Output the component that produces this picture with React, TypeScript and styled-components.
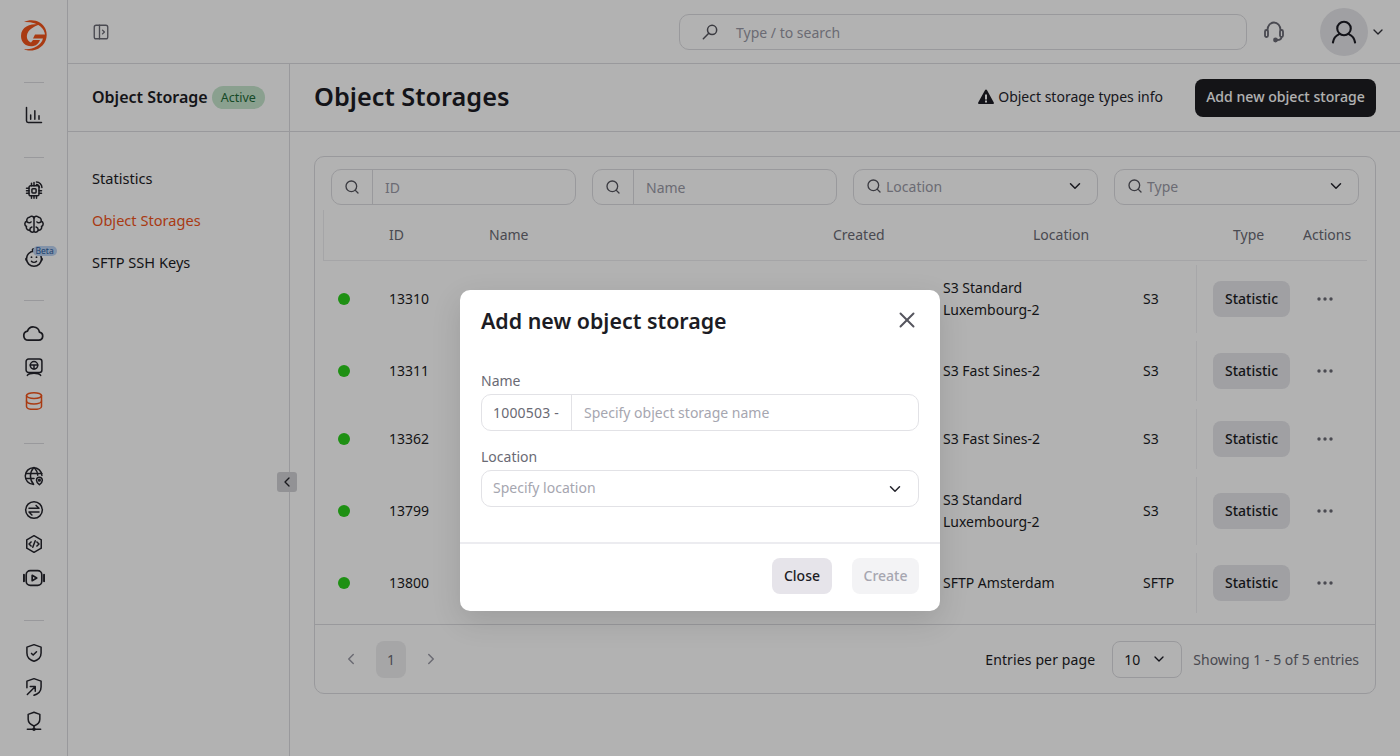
import React from 'react'
import styled, { createGlobalStyle } from 'styled-components'
import { ChevronDown, ChevronLeft, ChevronRight, Search, X } from 'lucide-react'

const GlobalStyle = createGlobalStyle`
	html, body {
		margin: 0;
		padding: 0;
		background: #fff;
	}
	body {
		font-family: 'Noto Sans', 'Open Sans', sans-serif;
		font-size: 14px;
		color: #1c1c24;
	}
	* {
		box-sizing: border-box;
	}
`

const orange = '#f2541b'

const Page = styled.div`
	position: relative;
	display: flex;
	width: 1400px;
	height: 756px;
	overflow: hidden;
`

const Rail = styled.nav`
	width: 68px;
	flex: none;
	display: flex;
	flex-direction: column;
	align-items: center;
	padding-top: 18px;
	border-right: 1px solid #dcdce0;
`

const LogoBox = styled.div`
	height: 34px;
	margin-bottom: 5px;
	display: flex;
	align-items: center;
`

const RailDivider = styled.div`
	width: 20px;
	height: 1px;
	flex: none;
	margin: 25px 0 15px;
	background: #dcdce0;
`

const RailItem = styled.div<{ $active?: boolean }>`
	position: relative;
	width: 34px;
	height: 34px;
	flex: none;
	display: flex;
	align-items: center;
	justify-content: center;
	color: ${p => (p.$active ? orange : '#24242c')};
`

const BetaBadge = styled.span`
	position: absolute;
	left: 16px;
	top: 5px;
	height: 10px;
	padding: 0 3px;
	border-radius: 5px;
	background: #bcd3f2;
	color: #2b5d9e;
	font-size: 8.500px;
	line-height: 10px;
`

const Column = styled.div`
	flex: 1;
	min-width: 0;
	display: flex;
	flex-direction: column;
`

const TopBar = styled.header`
	height: 64px;
	flex: none;
	display: flex;
	align-items: center;
	padding: 0 22px 0 24px;
	border-bottom: 1px solid #dcdce0;
`

const PanelToggle = styled.div`
	display: flex;
	color: #6a6a74;
	margin-right: 569px;
`

const SearchBox = styled.div`
	width: 568px;
	height: 36px;
	flex: none;
	display: flex;
	align-items: center;
	gap: 16px;
	padding-left: 20px;
	border: 1px solid #dcdce0;
	border-radius: 10px;
	color: #9a9aa6;
	svg {
		color: #55555e;
	}
	span {
		padding-top: 2px;
	}
`

const Headset = styled.div`
	display: flex;
	margin-left: 15px;
	color: #6a6a74;
`

const TopDivider = styled.div`
	width: 1px;
	height: 24px;
	margin: 0 16px 0 18px;
	background: #dcdce0;
`

const Avatar = styled.div`
	width: 48px;
	height: 48px;
	flex: none;
	display: flex;
	align-items: center;
	justify-content: center;
	border-radius: 50%;
	background: #e6e6ea;
	color: #1c1c24;
`

const AvatarCaret = styled.div`
	display: flex;
	margin-left: 2px;
	color: #33333b;
`

const Body = styled.div`
	flex: 1;
	min-height: 0;
	display: flex;
`

const SubNav = styled.aside`
	position: relative;
	width: 222px;
	flex: none;
	border-right: 1px solid #dcdce0;
`

const SubNavHeader = styled.div`
	height: 68px;
	display: flex;
	align-items: center;
	gap: 4px;
	padding: 0 0 1px 24px;
	border-bottom: 1px solid #dcdce0;
`

const SubNavTitle = styled.span`
	font-size: 16px;
	font-weight: 600;
`

const ActivePill = styled.span`
	height: 23px;
	padding: 0 9px;
	display: flex;
	align-items: center;
	border-radius: 12px;
	background: #c6e6cd;
	color: #1f6a38;
	font-size: 12.500px;
`

const SubNavList = styled.div`
	display: flex;
	flex-direction: column;
	padding: 25px 0 0 24px;
`

const SubNavLink = styled.a<{ $active?: boolean }>`
	height: 42px;
	display: flex;
	align-items: center;
	font-size: 14.600px;
	color: ${p => (p.$active ? orange : '#1c1c24')};
`

const Collapse = styled.div`
	position: absolute;
	right: -8px;
	top: 408px;
	width: 20px;
	height: 20px;
	display: flex;
	align-items: center;
	justify-content: center;
	border-radius: 3px;
	background: #d2d2d6;
	color: #24242c;
`

const Main = styled.main`
	flex: 1;
	min-width: 0;
	display: flex;
	flex-direction: column;
`

const PageHeader = styled.div`
	height: 68px;
	flex: none;
	display: flex;
	align-items: center;
	padding: 0 24px;
	border-bottom: 1px solid #dcdce0;
`

const PageTitle = styled.h1`
	flex: 1;
	margin: 0 0 3px;
	font-size: 25.300px;
	font-weight: 600;
	color: #1c1c24;
`

const InfoLink = styled.a`
	display: flex;
	align-items: center;
	gap: 4px;
	margin-right: 32px;
	padding-bottom: 2px;
	color: #24242c;
`

const PrimaryButton = styled.button`
	width: 181px;
	height: 38px;
	padding: 0 0 2px;
	border: 0;
	border-radius: 8px;
	background: #1e1e22;
	color: #fff;
	font: 500 14.100px 'Noto Sans', sans-serif;
`

const Content = styled.div`
	padding: 24px;
`

const Card = styled.section`
	height: 538px;
	display: flex;
	flex-direction: column;
	border: 1px solid #dcdce0;
	border-radius: 10px;
`

const Filters = styled.div`
	display: grid;
	grid-template-columns: repeat(4, 1fr);
	gap: 16px;
	padding: 12px 16px 0;
`

const FilterBox = styled.div`
	height: 36px;
	display: flex;
	align-items: center;
	border: 1px solid #dcdce0;
	border-radius: 10px;
	color: #9a9aa6;
`

const FilterIcon = styled.div`
	width: 41px;
	height: 100%;
	flex: none;
	display: flex;
	align-items: center;
	justify-content: center;
	border-right: 1px solid #dcdce0;
	color: #55555e;
`

const FilterText = styled.span`
	padding-left: 12px;
`

const ComboBox = styled(FilterBox)`
	gap: 4px;
	padding: 0 13px 2px 12px;
	> svg:first-child {
		color: #55555e;
	}
	> svg:last-child {
		margin-left: auto;
		color: #24242c;
	}
`

const Table = styled.div`
	display: flex;
	flex-direction: column;
	padding: 5px 8px 0;
	flex: 1;
`

const HeadRow = styled.div`
	height: 51px;
	padding-bottom: 2px;
	display: grid;
	grid-template-columns: 65px 100px 344px 200px 200px 70px 1fr;
	align-items: center;
	border: 1px solid #ececf0;
	border-width: 0 0 1px 1px;
	color: #6a6a74;
`

const Row = styled.div<{ $tall?: boolean }>`
	height: ${p => (p.$tall ? 76 : 68)}px;
	display: grid;
	grid-template-columns: 66px 100px 454px 200px 53px 17px 77px 1fr;
	align-items: center;
	color: #1c1c24;
	line-height: 22px;
`

const Dot = styled.span`
	margin-left: 15px;
	width: 12px;
	height: 12px;
	border-radius: 50%;
	background: #2bcf1c;
`

const ActionEdge = styled.span`
	height: calc(100% - 8px);
	width: 1px;
	background: #f0f0f3;
`

const StatButton = styled.button`
	height: 36px;
	padding: 0 0 2px;
	border: 0;
	border-radius: 8px;
	background: #e6e6ea;
	color: #1c1c24;
	font: 500 14px 'Noto Sans', sans-serif;
`

const MoreButton = styled.div`
	display: flex;
	justify-content: center;
	padding-right: 7px;
	color: #6a6a74;
`

const CardFooter = styled.div`
	height: 69px;
	flex: none;
	display: flex;
	align-items: center;
	padding: 0 16px 0 27px;
	border-top: 1px solid #dcdce0;
`

const Pager = styled.div`
	flex: 1;
	display: flex;
	align-items: center;
	color: #9a9aa6;
`

const PageNumber = styled.div`
	width: 30px;
	height: 37px;
	margin: 0 16px;
	display: flex;
	align-items: center;
	justify-content: center;
	border-radius: 8px;
	background: #eeeef0;
	color: #6a6a74;
`

const EntriesLabel = styled.span`
	letter-spacing: 0.13px;
`

const PageSize = styled.div`
	width: 70px;
	height: 37px;
	margin: 0 11px 0 17px;
	display: flex;
	align-items: center;
	justify-content: space-between;
	padding: 0 14px 0 11px;
	border: 1px solid #dcdce0;
	border-radius: 8px;
`

const Muted = styled.span`
	color: #6a6a74;
`

const Overlay = styled.div`
	position: absolute;
	inset: 0;
	display: flex;
	justify-content: center;
	align-items: flex-start;
	padding-top: 290px;
	background: rgba(0, 0, 0, 0.3);
`

const Modal = styled.div`
	width: 480px;
	height: 321px;
	display: flex;
	flex-direction: column;
	border-radius: 10px;
	background: #fff;
	box-shadow: 0 10px 30px rgba(0, 0, 0, 0.12);
`

const ModalHead = styled.div`
	height: 62px;
	flex: none;
	display: flex;
	align-items: center;
	justify-content: space-between;
	padding: 0 20px 2px 21px;
`

const ModalTitle = styled.h2`
	margin: 0;
	font-size: 21.400px;
	font-weight: 600;
	color: #1c1c24;
`

const CloseIcon = styled.div`
	display: flex;
	color: #55555e;
`

const ModalBody = styled.div`
	flex: 1;
	display: flex;
	flex-direction: column;
	padding: 18px 21px 0;
`

const Label = styled.label`
	display: block;
	height: 24px;
	line-height: 22px;
	color: #6a6a74;
`

const FieldRow = styled.div`
	height: 37px;
	flex: none;
	display: flex;
	align-items: center;
	margin-bottom: 15px;
	border: 1px solid #e2e2e6;
	border-radius: 10px;
	color: #a6a6b0;
`

const Prefix = styled.span`
	width: 90px;
	height: 100%;
	flex: none;
	display: flex;
	align-items: center;
	padding-left: 11px;
	letter-spacing: 0.2px;
	border-right: 1px solid #e2e2e6;
	color: #6a6a74;
`

const FieldText = styled.span`
	flex: 1;
	padding-left: 12px;
`

const SelectText = styled(FieldText)`
	padding: 0 0 2px 11px;
`

const FieldCaret = styled.div`
	display: flex;
	margin-right: 14px;
	color: #24242c;
`

const ModalFoot = styled.div`
	height: 69px;
	flex: none;
	display: flex;
	align-items: center;
	justify-content: flex-end;
	gap: 20px;
	padding: 0 21px 3px;
	border-top: 2px solid #ececf0;
`

const ModalButton = styled.button<{ $disabled?: boolean }>`
	width: ${p => (p.$disabled ? 67 : 60)}px;
	height: 36px;
	padding: 0 0 1px;
	border: 0;
	border-radius: 8px;
	background: ${p => (p.$disabled ? '#f3f3f5' : '#e6e4ea')};
	color: ${p => (p.$disabled ? '#a6a6b0' : '#1c1c24')};
	font: 500 14px 'Noto Sans', sans-serif;
`

const Glyph = ({ children, size = 20 }: { children: React.ReactNode; size?: number }) => (
	<svg
		width={size}
		height={size}
		viewBox="0 0 24 24"
		fill="none"
		stroke="currentColor"
		strokeWidth="1.800"
		strokeLinecap="round"
		strokeLinejoin="round"
	>
		{children}
	</svg>
)

const Logo = () => (
	<svg width="30" height="34" viewBox="7 3 30 34" fill={orange}>
		<path d="M12 7C20 3 30 6 33.500 14 37.500 24 31 34 20.500 35.500 17.500 35.900 14 35.300 12 34 20 35 29 31 31 23.500H21L23 19.500H33C32.500 14 27 6.500 12 7z" />
		<path d="M28 9C20 8.500 9 10.500 9 21 9 28 15 32.500 21.500 31 25 30.200 27 28 28 25H21L19 27.500C16 26.500 14.300 23 15 20 16 15 21 12 28 9z" />
	</svg>
)

const ChartIcon = () => (
	<Glyph>
		<path d="M3 3v16a2 2 0 0 0 2 2h16" />
		<path d="M8 17v-5M13 17V7M18 17v-4" />
	</Glyph>
)

const ChipIcon = () => (
	<Glyph>
		<rect x="6" y="7" width="12" height="12" rx="2" />
		<rect x="9.500" y="10.500" width="5" height="5" rx="1" />
		<path d="M3 10h3M3 13h3M3 16h3M9 19v3M12 19v3M15 19v3M18 16h3M18 13h3M9 7V4M12 7V3" />
		<path d="M15 2.500a6.500 6.500 0 0 1 6.500 6.500M15 5.500a3.500 3.500 0 0 1 3.500 3.500" />
	</Glyph>
)

const BrainIcon = () => (
	<Glyph>
		<path d="M12 4v17M12 5a3 3 0 0 0-5.500-1A3.500 3.500 0 0 0 3.500 8.500 3.500 3.500 0 0 0 3 15a3.500 3.500 0 0 0 4 4.500 3 3 0 0 0 5 1.500" />
		<path d="M12 5a3 3 0 0 1 5.500-1 3.500 3.500 0 0 1 3 4.500A3.500 3.500 0 0 1 21 15a3.500 3.500 0 0 1-4 4.500 3 3 0 0 1-5 1.500" />
		<path d="M3.500 9.500c2 1.500 4 1.500 5 0M20.500 9.500c-2 1.500-4 1.500-5 0M7 19c0-2 1-3 2.500-3.500M17 19c0-2-1-3-2.500-3.500" />
	</Glyph>
)

const BabyIcon = () => (
	<Glyph>
		<circle cx="12" cy="13" r="9" />
		<path d="M12 4c-2.500-.5-2.500-3 0-3" />
		<path d="M9 11v.01M15 11v.01" strokeWidth="2.200" />
		<path d="M9 16c1.500 1.300 4.500 1.300 6 0" />
		<path d="M3 12a1.800 1.800 0 0 0 0 3M21 12a1.800 1.800 0 0 1 0 3" />
	</Glyph>
)

const CloudIcon = () => (
	<Glyph size={23}>
		<path d="M17.500 19H6.500a4.800 4.800 0 0 1-.8-9.500 6.500 6.500 0 0 1 12.500 1A4.300 4.300 0 0 1 17.500 19z" />
	</Glyph>
)

const MonitorIcon = () => (
	<Glyph>
		<rect x="2.500" y="2.500" width="19" height="16" rx="3" />
		<circle cx="12" cy="10" r="4.500" />
		<path d="M7.500 9.500h9M12 10v4.500M4 22c1.500-2 4-2.500 8-2.500s6.500.5 8 2.500" />
	</Glyph>
)

const DatabaseIcon = () => (
	<Glyph>
		<ellipse cx="12" cy="5.500" rx="9" ry="3.500" />
		<path d="M3 5.500v13c0 2 4 3.500 9 3.500s9-1.500 9-3.500v-13" />
		<path d="M3 12c0 2 4 3.500 9 3.500s9-1.500 9-3.500" />
	</Glyph>
)

const GlobeIcon = () => (
	<Glyph>
		<path d="M21.500 11.500A10 10 0 1 0 11 22" />
		<path d="M2.500 9h19M2.500 15H12M11.500 2c-5 5.500-5 14.500 0 20M12.500 2c2.500 2.700 3.700 5.800 4 9" />
		<path d="M18.500 22.500s3.500-2.800 3.500-5.500a3.500 3.500 0 0 0-7 0c0 2.700 3.500 5.500 3.500 5.500z" />
		<circle cx="18.500" cy="17" r="1" />
	</Glyph>
)

const ExchangeIcon = () => (
	<Glyph>
		<circle cx="12" cy="12" r="10" />
		<path d="M6 10h12l-3.500-3.500M18 14.500H6l3.500 3.500" />
	</Glyph>
)

const CodeIcon = () => (
	<Glyph>
		<path d="M12 2l8.700 5v10L12 22l-8.700-5V7z" />
		<path d="M8.500 9.500L6 12l2.500 2.500M15.500 9.500L18 12l-2.500 2.500M13.500 8l-3 8" />
	</Glyph>
)

const VideoIcon = () => (
	<Glyph size={22}>
		<rect x="3.500" y="4" width="17" height="16" rx="4.500" />
		<path d="M10 9l5 3-5 3z" />
		<path d="M1 8.500v7M23 8.500v7" strokeWidth="2.200" />
	</Glyph>
)

const ShieldIcon = () => (
	<Glyph>
		<path d="M12 2l8.500 3v7c0 5.500-4 8.500-8.500 10-4.500-1.500-8.500-4.500-8.500-10V5z" />
		<path d="M9 12.500l2 2 4-4" />
	</Glyph>
)

const ShieldArrowIcon = () => (
	<Glyph>
		<path d="M3.500 13V5L12 2l8.500 3v7c0 5.500-4 8.500-8.500 10" />
		<path d="M4 21l9-9M7.500 11.500H13.500V17" />
	</Glyph>
)

const NodeIcon = () => (
	<Glyph>
		<path d="M12 1.500l7 2.500v6c0 4-3 6.500-7 8-4-1.500-7-4-7-8V4z" />
		<path d="M12 18v2.500M4 22H20" />
		<circle cx="12" cy="21.800" r="1.200" />
	</Glyph>
)

const PanelIcon = () => (
	<Glyph size={18}>
		<rect x="3" y="3" width="18" height="18" rx="2.500" />
		<path d="M10 3v18M14 9.500l2.500 2.500-2.500 2.500" />
	</Glyph>
)

const SearchGlass = () => (
	<Glyph size={20}>
		<circle cx="14.500" cy="9.500" r="5.500" />
		<path d="M10.500 13.500L4 20" />
	</Glyph>
)

const HeadsetIcon = () => (
	<Glyph size={24}>
		<path d="M5.500 10a6.500 7.500 0 0 1 13 0" />
		<rect x="3" y="10" width="3" height="7" rx="1.500" />
		<rect x="18" y="10" width="3" height="7" rx="1.500" />
		<path d="M19.500 17c0 2-1.500 3-4.500 3" />
		<circle cx="13.500" cy="20" r="1.500" fill="currentColor" />
	</Glyph>
)

const UserIcon = () => (
	<Glyph size={28}>
		<circle cx="12" cy="9" r="5.800" />
		<path d="M8 13.800C5 15 3 18 2.500 21M16 13.800c3 1.200 5 4.200 5.500 7.200" />
	</Glyph>
)

const WarningIcon = () => (
	<svg width="16" height="16" viewBox="0 0 16 16">
		<path
			fill="#1c1c24"
			fillRule="evenodd"
			d="M8 .5c.4 0 .7.2.9.5l6.900 12.500c.3.600-.1 1.500-.9 1.500H1.100c-.8 0-1.200-.9-.9-1.500L7.100 1c.2-.3.5-.5.9-.5zM7 5.500v5h2v-5zm0 6v2h2v-2z"
		/>
	</svg>
)

const DotsIcon = () => (
	<svg width="18" height="4" viewBox="0 0 18 4" fill="currentColor">
		<circle cx="3" cy="2" r="1.700" />
		<circle cx="9" cy="2" r="1.700" />
		<circle cx="15" cy="2" r="1.700" />
	</svg>
)

const railGroups = [
	[<ChartIcon />],
	[<ChipIcon />, <BrainIcon />, <BabyIcon />],
	[<CloudIcon />, <MonitorIcon />, <DatabaseIcon />],
	[<GlobeIcon />, <ExchangeIcon />, <CodeIcon />, <VideoIcon />],
	[<ShieldIcon />, <ShieldArrowIcon />, <NodeIcon />]
]

const rows = [
	{ id: 13310, location: ['S3 Standard', 'Luxembourg-2'], type: 'S3' },
	{ id: 13311, location: ['S3 Fast Sines-2'], type: 'S3' },
	{ id: 13362, location: ['S3 Fast Sines-2'], type: 'S3' },
	{ id: 13799, location: ['S3 Standard', 'Luxembourg-2'], type: 'S3' },
	{ id: 13800, location: ['SFTP Amsterdam'], type: 'SFTP' }
]

export default function App() {
	return (
		<Page>
			<GlobalStyle />
			<Rail>
				<LogoBox>
					<Logo />
				</LogoBox>
				{railGroups.map((group, g) => (
					<React.Fragment key={g}>
						<RailDivider />
						{group.map((icon, i) => (
							<RailItem key={i} $active={g === 2 && i === 2}>
								{icon}
								{g === 1 && i === 2 && <BetaBadge>Beta</BetaBadge>}
							</RailItem>
						))}
					</React.Fragment>
				))}
			</Rail>
			<Column>
				<TopBar>
					<PanelToggle>
						<PanelIcon />
					</PanelToggle>
					<SearchBox>
						<SearchGlass />
						<span>Type / to search</span>
					</SearchBox>
					<Headset>
						<HeadsetIcon />
					</Headset>
					<TopDivider />
					<Avatar>
						<UserIcon />
					</Avatar>
					<AvatarCaret>
						<ChevronDown size={16} />
					</AvatarCaret>
				</TopBar>
				<Body>
					<SubNav>
						<SubNavHeader>
							<SubNavTitle>Object Storage</SubNavTitle>
							<ActivePill>Active</ActivePill>
						</SubNavHeader>
						<SubNavList>
							<SubNavLink>Statistics</SubNavLink>
							<SubNavLink $active>Object Storages</SubNavLink>
							<SubNavLink>SFTP SSH Keys</SubNavLink>
						</SubNavList>
						<Collapse>
							<ChevronLeft size={16} />
						</Collapse>
					</SubNav>
					<Main>
						<PageHeader>
							<PageTitle>Object Storages</PageTitle>
							<InfoLink>
								<WarningIcon />
								Object storage types info
							</InfoLink>
							<PrimaryButton>Add new object storage</PrimaryButton>
						</PageHeader>
						<Content>
							<Card>
								<Filters>
									<FilterBox>
										<FilterIcon>
											<Search size={16} />
										</FilterIcon>
										<FilterText>ID</FilterText>
									</FilterBox>
									<FilterBox>
										<FilterIcon>
											<Search size={16} />
										</FilterIcon>
										<FilterText>Name</FilterText>
									</FilterBox>
									<ComboBox>
										<Search size={16} />
										<span>Location</span>
										<ChevronDown size={18} />
									</ComboBox>
									<ComboBox>
										<Search size={16} />
										<span>Type</span>
										<ChevronDown size={18} />
									</ComboBox>
								</Filters>
								<Table>
									<HeadRow>
										<span />
										<span>ID</span>
										<span>Name</span>
										<span>Created</span>
										<span>Location</span>
										<span>Type</span>
										<span>Actions</span>
									</HeadRow>
									{rows.map(row => (
										<Row key={row.id} $tall={row.location.length > 1}>
											<Dot />
											<span>{row.id}</span>
											<span />
											<span>
												{row.location.map(line => (
													<div key={line}>{line}</div>
												))}
											</span>
											<span>{row.type}</span>
											<ActionEdge />
											<StatButton>Statistic</StatButton>
											<MoreButton>
												<DotsIcon />
											</MoreButton>
										</Row>
									))}
								</Table>
								<CardFooter>
									<Pager>
										<ChevronLeft size={18} />
										<PageNumber>1</PageNumber>
										<ChevronRight size={18} />
									</Pager>
									<EntriesLabel>Entries per page</EntriesLabel>
									<PageSize>
										10
										<ChevronDown size={16} />
									</PageSize>
									<Muted>Showing 1 - 5 of 5 entries</Muted>
								</CardFooter>
							</Card>
						</Content>
					</Main>
				</Body>
			</Column>
			<Overlay>
				<Modal>
					<ModalHead>
						<ModalTitle>Add new object storage</ModalTitle>
						<CloseIcon>
							<X size={26} strokeWidth={1.8} />
						</CloseIcon>
					</ModalHead>
					<ModalBody>
						<Label>Name</Label>
						<FieldRow>
							<Prefix>1000503 -</Prefix>
							<FieldText>Specify object storage name</FieldText>
						</FieldRow>
						<Label>Location</Label>
						<FieldRow>
							<SelectText>Specify location</SelectText>
							<FieldCaret>
								<ChevronDown size={18} />
							</FieldCaret>
						</FieldRow>
					</ModalBody>
					<ModalFoot>
						<ModalButton>Close</ModalButton>
						<ModalButton $disabled>Create</ModalButton>
					</ModalFoot>
				</Modal>
			</Overlay>
		</Page>
	)
}
